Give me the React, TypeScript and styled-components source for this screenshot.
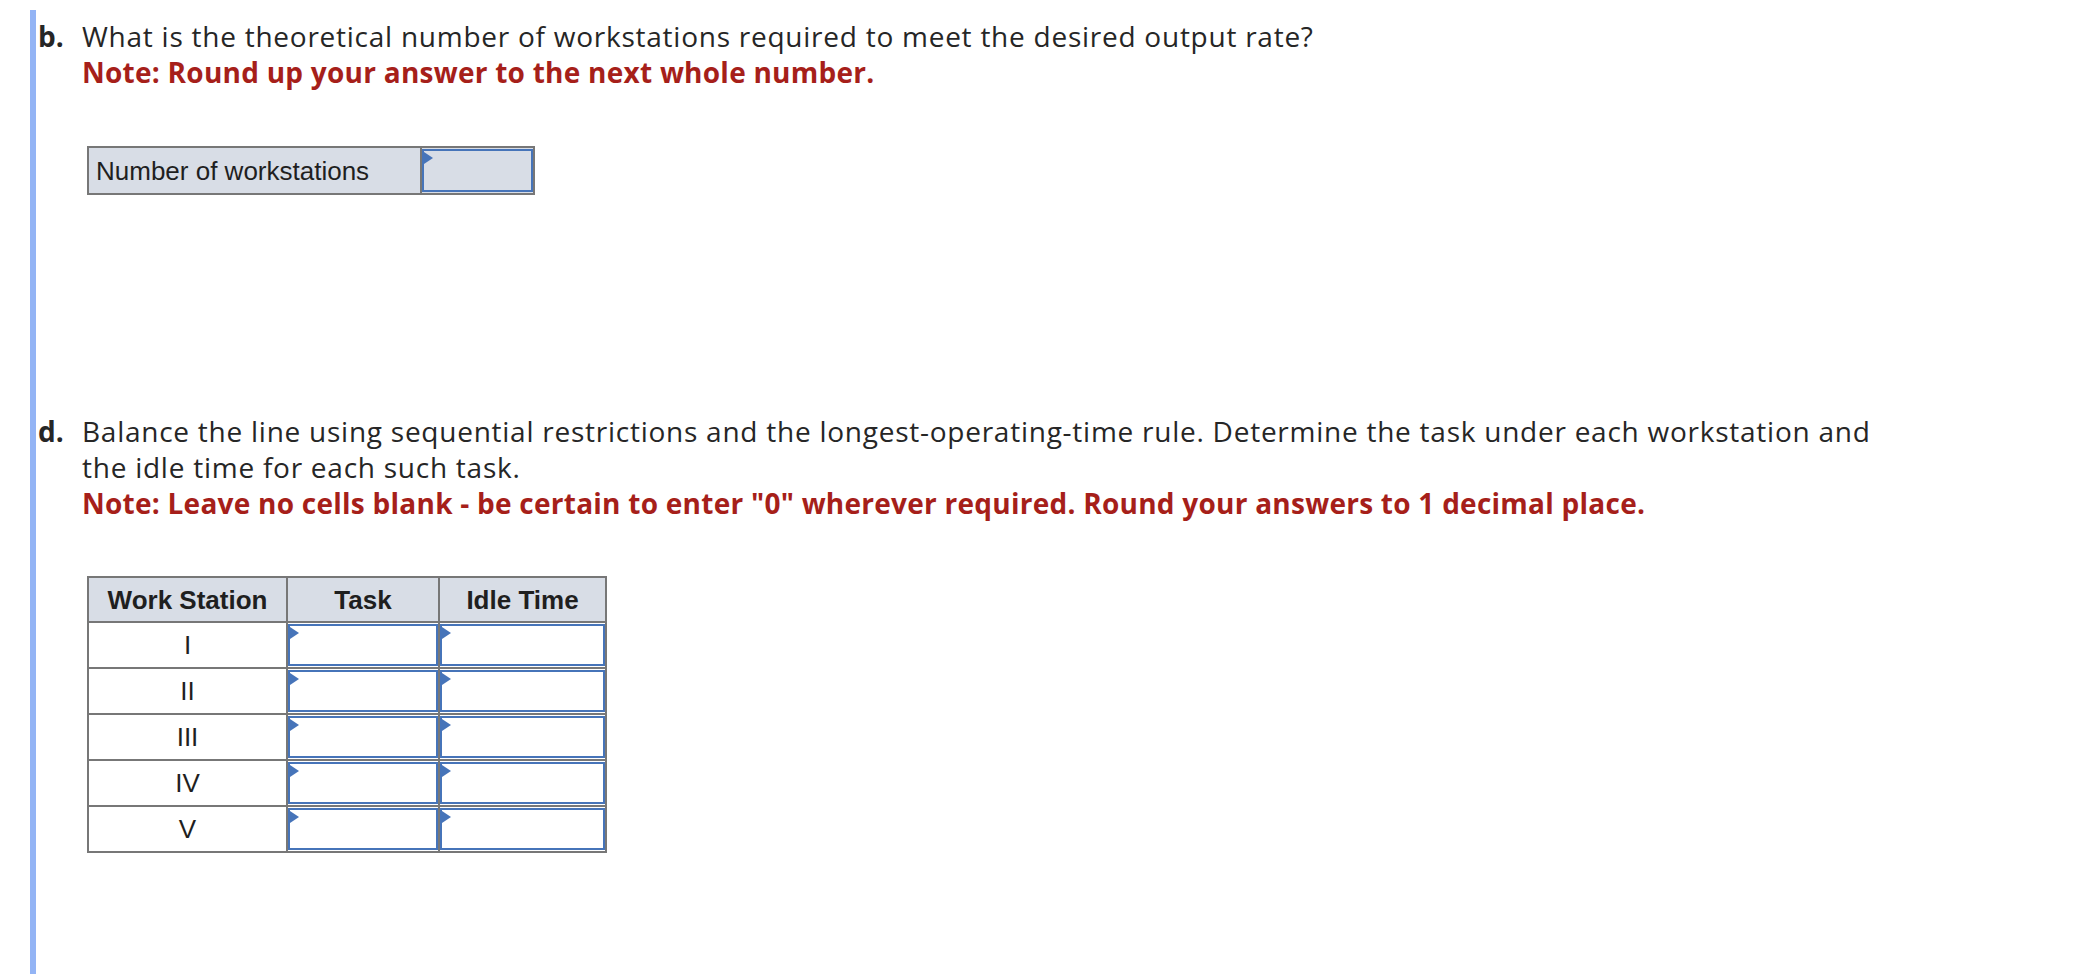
import React from 'react';
import styled, { createGlobalStyle } from 'styled-components';

const GlobalStyle = createGlobalStyle`
  html, body {
    margin: 0;
    padding: 0;
    background: #ffffff;
  }
`;

const Page = styled.div`
  padding: 10px 0 0 30px;
  font-family: "Open Sans", Lato, sans-serif;
  color: #262626;
`;

const Part = styled.div`
  border-left: 6px solid #93b4f5;
  min-height: 964px;
  padding: 8px 0 0 2px;
  box-sizing: border-box;
`;

const Question = styled.div<{ gapTop?: number }>`
  display: grid;
  grid-template-columns: 44px 1830px;
  margin-top: ${props => props.gapTop || 0}px;
  font-size: 28px;
  line-height: 36px;
`;

const Letter = styled.span`
  font-weight: 700;
`;

const Prompt = styled.div`
  letter-spacing: 0.75px;
`;

const Note = styled.div`
  color: #a61f1a;
  font-weight: 700;
  letter-spacing: 0.25px;
`;

const GridTable = styled.table<{ gapTop: number }>`
  border-collapse: collapse;
  margin: ${props => props.gapTop}px 0 0 5px;
  font-family: "Liberation Sans", Arial, sans-serif;
  font-size: 26px;
  color: #1f1f1f;
`;

const Cell = styled.td<{ width: number; height: number; shaded?: boolean; bold?: boolean; align?: string }>`
  border: 2px solid #777777;
  width: ${props => props.width}px;
  height: ${props => props.height}px;
  box-sizing: border-box;
  padding: 0 7px;
  background: ${props => (props.shaded ? '#d8dde6' : '#ffffff')};
  font-weight: ${props => (props.bold ? 700 : 400)};
  text-align: ${props => props.align || 'left'};
  line-height: 1;
`;

const InputCell = styled.td<{ width: number; height: number; shaded?: boolean }>`
  border: 2px solid #777777;
  width: ${props => props.width}px;
  height: ${props => props.height}px;
  box-sizing: border-box;
  padding: 1px 0;
  background: ${props => (props.shaded ? '#d8dde6' : '#ffffff')};
`;

const InputBox = styled.div`
  position: relative;
  height: 100%;
  border: 2px solid #4674b9;
  box-sizing: border-box;

  &::before {
    content: '';
    position: absolute;
    top: 1px;
    left: 0;
    border-left: 9px solid #4674b9;
    border-top: 6px solid transparent;
    border-bottom: 6px solid transparent;
  }
`;

const stations = ['I', 'II', 'III', 'IV', 'V'];

export default function App() {
  return (
    <Page>
      <GlobalStyle />
      <Part>
        <Question>
          <Letter>b.</Letter>
          <div>
            <Prompt>What is the theoretical number of workstations required to meet the desired output rate?</Prompt>
            <Note>Note: Round up your answer to the next whole number.</Note>
            <GridTable gapTop={56}>
              <tbody>
                <tr>
                  <Cell width={333} height={47} shaded>Number of workstations</Cell>
                  <InputCell width={113} height={47} shaded>
                    <InputBox />
                  </InputCell>
                </tr>
              </tbody>
            </GridTable>
          </div>
        </Question>

        <Question gapTop={218}>
          <Letter>d.</Letter>
          <div>
            <Prompt>
              Balance the line using sequential restrictions and the longest-operating-time rule. Determine the task under each workstation and the idle time for each such task.
            </Prompt>
            <Note>
              Note: Leave no cells blank - be certain to enter "0" wherever required. Round your answers to 1 decimal place.
            </Note>
            <GridTable gapTop={55}>
              <thead>
                <tr>
                  <Cell as="th" width={199} height={45} shaded bold align="center">Work Station</Cell>
                  <Cell as="th" width={152} height={45} shaded bold align="center">Task</Cell>
                  <Cell as="th" width={167} height={45} shaded bold align="center">Idle Time</Cell>
                </tr>
              </thead>
              <tbody>
                {stations.map(s => (
                  <tr key={s}>
                    <Cell width={199} height={46} align="center">{s}</Cell>
                    <InputCell width={152} height={46}>
                      <InputBox />
                    </InputCell>
                    <InputCell width={167} height={46}>
                      <InputBox />
                    </InputCell>
                  </tr>
                ))}
              </tbody>
            </GridTable>
          </div>
        </Question>
      </Part>
    </Page>
  );
}
